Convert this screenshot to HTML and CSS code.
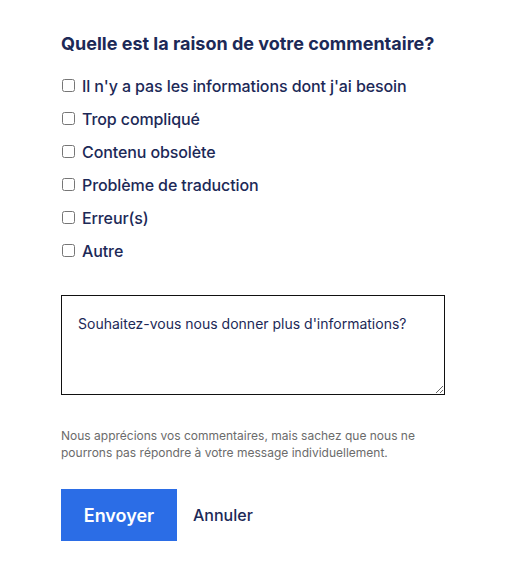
FILE: index.html
```html
<!DOCTYPE html>
<html lang="fr">
<head>
  <meta charset="UTF-8">
  <title>Commentaire</title>
  <link rel="stylesheet" href="styles.css">
</head>
<body>
  <form class="feedback">
    <h2>Quelle est la raison de votre commentaire?</h2>

    <ul class="reasons">
      <li><label><input type="checkbox"> Il n'y a pas les informations dont j'ai besoin</label></li>
      <li><label><input type="checkbox"> Trop compliqué</label></li>
      <li><label><input type="checkbox"> Contenu obsolète</label></li>
      <li><label><input type="checkbox"> Problème de traduction</label></li>
      <li><label><input type="checkbox"> Erreur(s)</label></li>
      <li><label><input type="checkbox"> Autre</label></li>
    </ul>

    <textarea placeholder="Souhaitez-vous nous donner plus d'informations?"></textarea>

    <p class="note">Nous apprécions vos commentaires, mais sachez que nous ne pourrons pas répondre à votre message individuellement.</p>

    <div class="actions">
      <button type="submit" class="send">Envoyer</button>
      <button type="button" class="cancel">Annuler</button>
    </div>
  </form>
</body>
</html>
```

FILE: styles.css
```css
* {
  margin: 0;
  padding: 0;
  box-sizing: border-box;
}

body {
  font-family: 'Inter', sans-serif;
  background-color: #fff;
  color: #1c2957;
}

.feedback {
  width: 445px;
  padding: 32px 0 0 61px;
}

h2 {
  font-size: 18px;
  font-weight: 700;
  line-height: 24px;
  margin-bottom: 13px;
}

.reasons {
  list-style: none;
}

.reasons li {
  height: 33px;
  display: flex;
  align-items: center;
}

.reasons label {
  display: flex;
  align-items: center;
  gap: 7px;
  font-size: 16px;
  font-weight: 500;
  letter-spacing: -0.1px;
}

.reasons input {
  width: 13px;
  height: 13px;
  margin: 0 0 0 1px;
}

textarea {
  display: block;
  width: 384px;
  height: 100px;
  margin-top: 28px;
  padding: 19px 16px;
  border: 1px solid #111;
  font-family: 'Inter', sans-serif;
  font-size: 14px;
  line-height: 18px;
}

textarea::placeholder {
  color: #1c2957;
  opacity: 1;
}

.note {
  margin-top: 32px;
  font-size: 12px;
  line-height: 17px;
  color: #6b6b6b;
  width: 384px;
}

.actions {
  display: flex;
  align-items: center;
  gap: 16px;
  margin-top: 28px;
}

.send {
  width: 116px;
  height: 52px;
  background-color: #2b6de6;
  color: #fff;
  border: none;
  font-family: 'Inter', sans-serif;
  font-size: 18px;
  font-weight: 600;
}

.cancel {
  background: none;
  border: none;
  color: #1c2957;
  font-family: 'Inter', sans-serif;
  font-size: 16px;
  font-weight: 500;
}
```
